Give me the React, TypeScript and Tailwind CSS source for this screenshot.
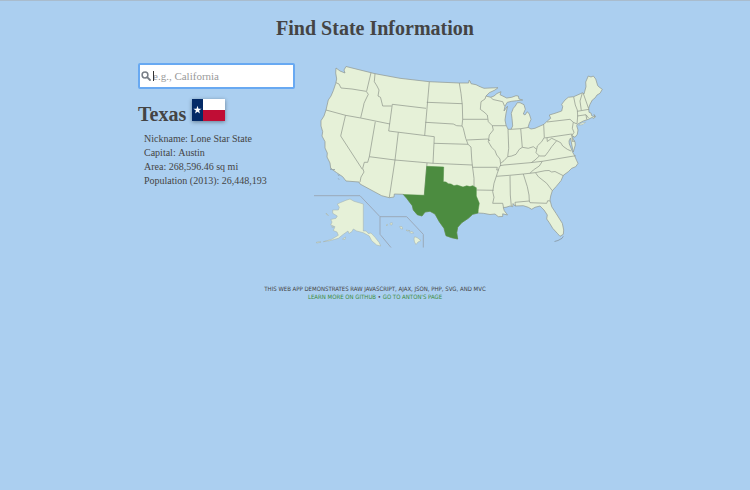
import React from "react";

const LAND =
  "M336 68L340 71L345 73L344 70L346 66.5L371 72.7L375 73.7L400 78.3L429.3 81.7L459.3 83L468.6 83L469 80.3L470 81L471 83.7L476 84.7L480 86.7L484 88.3L490 88L498 87.7L495 90L489.3 92.7L486 96L490.7 97.3L494 96L497 93.5L501 91.7L500 94.7L502.7 96L506.7 98L511.7 97.3L516 95.7L518.3 96L519 99L522.7 100L516.7 100.7L511.7 101.3L507.3 102.3L505 106L504 111L507.5 106.3L506 113.3L505 120L506 125L508 129.3L511 129.3L512.7 126L512 118.3L511.3 113.3L513.3 108.3L515.3 106L517.3 102.7L520 102.7L524 104.7L525.3 109.3L523.3 114L525 115L527.3 111.7L529.3 114L531 119.3L529.3 123.3L528 127.3L531 129L535 128.3L544 124.3L547.3 121L550.7 118.3L549.3 115L555 113.3L561.7 111L562.7 106.7L561.7 104.3L565 100L568.3 97.3L573.7 96.7L582.7 92.7L584 94L586 86.7L585.7 82L588.3 76L591 77L593.3 76L595.7 79L597.7 85.7L600 87.7L602.3 89.3L600 93.3L597 95L595 98L592.3 100L590 104.3L588.7 108L589 112.3L591 113L591.7 115.7L595 117L594 114.5L595.5 116.5L594 118.3L592 117.5L588.3 119.3L583.3 121L578.3 123.7L576.7 125.7L578 130L577.3 134.3L575 137.3L572.7 136L573 139L575 142L575.3 145L573.3 152L572 146L571.3 142L570.5 138L569 141L569.3 144L571 148L572.5 152L574.5 155.5L576.7 160.7L578 163.3L575.7 166.7L571.7 168.3L568.3 171.7L563.3 175.3L561 180.7L556 186.7L552.3 190.7L550.7 196L550 200L551.7 206.7L556 213.3L562.3 223.3L563.7 230L563.3 234.3L560 236.3L557.3 233.3L552.7 228.3L549.3 222.7L546.7 219L547.3 215L544 210L540 206L535 207.3L531.7 209.3L528.3 207.3L523.3 205.7L515 206L513 203.5L512.7 206.7L510 206L506 207.3L503.3 207.5L504.3 210.7L507.5 215L502.7 213.8L502.7 216.5L498.3 216.7L495 214L490 214.5L483.3 213.3L478 213L472.7 214.3L468.3 218.3L461.7 222.7L457.7 227.3L456.7 232.7L457.7 239L451.7 237.7L446 235.7L444 228.3L439.3 221.7L435 214L430 211.3L425 212L422 216L417.3 214.7L413.3 210L412.3 205.7L406.7 198.3L403.3 194.3L394.3 194L394 197L389.3 197.7L381.7 195.7L360 184L359 182L346 181L342.7 176.7L336.7 172.7L330.7 168.3L330 163L327 157L327.3 153L325 148L325 141.7L322 136L322.7 131.7L321 126L321 120.7L324 116L326 110L328.3 100L331 96L333.3 90.7L335.7 83.5L336.7 79L335.7 73Z";

const TEXAS =
  "M426.7 166.3L443.7 167L443.3 181.7L446 182L448.3 183.7L451 184L454 185.7L457 185L460 186L463 187L466.7 185.8L470 186.6L472.7 185.7L476.3 187.7L476.3 196L479.3 203.3L478.3 209.3L478 213L472.7 214.3L468.3 218.3L461.7 222.7L457.7 227.3L456.7 232.7L457.7 239L451.7 237.7L446 235.7L444 228.3L439.3 221.7L435 214L430 211.3L425 212L422 216L417.3 214.7L413.3 210L412.3 205.7L406.7 198.3L403.3 194.5L424.3 195.3Z";

const BORDERS = [
  // Pacific and mountain states
  "M336 82.7L339 84L341 88L352 89L358 90L366 91.3",
  "M371 72.7L366.5 91.7L368.3 94.3L366 99L364 103.3L363.5 106L360.7 117.7",
  "M326 110L345.5 115.3L360.7 118L390 124",
  "M375 73.7L374.3 81.7L377 86L379 90L378 96L380.5 97.3L382.7 106L391.7 106",
  "M392.3 104.3L388.7 131L434.3 136.7",
  "M392.3 104.3L426 108.3",
  "M345.5 115.3L340.7 136L362.3 169.3",
  "M375.3 121.7L369.3 156.7L367.7 162.3L364.3 162.3L362.7 168.3L364 172L361 177L360 182",
  "M369.3 156.7L395 160L433 163.3L472.3 165",
  "M398.3 132.3L395 160L389.3 197.5",
  "M427 163L424.3 195.3",
  // Plains
  "M429.3 81.7L424.7 135.3",
  "M426.7 102.3L462.3 103.7",
  "M425.3 122.3L453.3 124L456.7 125.7L462 126",
  "M434.3 136.7L433 163.3",
  "M434 143.3L468 144.3",
  "M459.3 83L461 93.3L462.3 105L462.7 119.3L462 125.7L463.3 128.3L465.7 138.3L468 144.3L471 147L471.7 159L472.3 165L474 178.3L474 186.3",
  "M462.7 119.3L487.7 119.3",
  "M466.7 140L488.3 139L490 141",
  "M472.5 167.3L497.3 167.3L496.7 170L498.5 170",
  "M476.3 190L493.5 190.3",
  // Mississippi River
  "M486 96L485 99L481 101.7L480.3 109.3L484 112L487.3 115L488.3 121.7L492.3 125.7L493.3 130L489.3 135L488.3 141.7L491.7 147.3L495 150.7L496.7 155L500 159L500.7 165L499.3 167.3L497.3 173.3L494 183.3L492.7 191.7L494 197.3L492.7 203.3L502.7 203.3L503.5 207.5",
  // Great Lakes
  "M490.7 97.3L493 99.5L502.7 101.7L504.5 106",
  "M492.3 125.7L506 125.7",
  "M508 129.3L508.7 148.3L507.7 156.7",
  "M520.7 128.7L522.3 147.3",
  "M511 129.3L520.7 128.7L528 127.5",
  // Ohio River and Appalachia
  "M500.7 163.3L504 160.7L507.7 156.7L511.7 156L516 154.3L519.3 149.3L522.3 147.3L528.3 148.3L533.3 146.7L536.7 149.3L537.3 146L541.7 141.7L544.3 137.3L543.7 124.5",
  "M536.7 149.3L536 152.7L539.3 156L535 160L531.5 162.5",
  "M539.3 156L545 156L548.3 151.7L551.7 146.7L556.7 140.7",
  "M544.3 138L571.7 134L572.5 141.5L575 141",
  "M547 138L547.3 141.5L551.7 138.3L556.7 140.7L560.7 142.7L562.7 146L567.3 149.3L571 151",
  // South
  "M500 165.7L504 165L530 162.7L542.3 161.3L575.7 155.7",
  "M542.3 161.3L539.3 166L533.3 170L530 173.3",
  "M496.5 176.3L509.7 175.3L523.3 174L535 172.7L545 170.7L549 170.5L551.7 172L555 171.5L563.3 175.7",
  "M510 175.7L510.3 195L511.3 206",
  "M523.3 174L527.3 186.7L529 195L529.3 201L530 202.7L546.7 203.3L547.7 200.7L550 201",
  "M515.5 206L515 202.3L529.3 201",
  "M535.7 173L538.3 176.7L546.7 183.3L552.3 190.7",
  // Northeast
  "M547 122L570 119.3L573.3 122.3L572.3 128.3L574 132.3L571.7 136",
  "M573.3 122.3L577 124L577.7 116L577.3 110L575.3 105L573.7 97",
  "M582.3 93.2L580 101L581.3 110.3",
  "M583.3 93.5L588.5 108.3",
  "M577.3 111.3L589 109.3",
  "M577.3 116L586 114.7L588.5 118",
  "M586 115L586.7 119.3",
];

const ISLANDS = [
  "M578.5 125.3L581 123.3L585.5 122L583 124.5Z",
  // Alaska
  "M340.7 202.5L346 200.3L350 199L354 201.3L363.3 204L363.3 231L366 231L368.3 233.5L371 233L375 237.3L379.3 242.7L380.7 246L376.7 245L371.7 240.7L369.3 236L363.3 232.7L356.7 231L353.3 229L352 231.5L349 233.5L348 231L343.3 234.3L338.3 238.3L330 240.7L323.3 241.7L331.7 239.3L338.3 235.3L337 232L333.3 230.5L335 226.7L330.7 225L332 222L330.7 219.5L336 218.3L337.3 216L332.7 213.3L332.7 210L338.3 210L339.3 207.3L337.3 204Z",
  "M342.5 239L345.5 237L345 239.5Z",
  "M326 213L328.5 215.5L326.5 214.5Z",
  "M332 226L334 227L332 227.5Z",
  "M316 242.5L319 241.7L321 242L317 243Z",
  // Hawaii
  "M386 225L387.5 224.3L387 226Z",
  "M390 223.2L392.3 222.7L392 225L390.3 224.7Z",
  "M399.7 226.5L402 226.7L402.7 229L400.7 228.7Z",
  "M406 230L410 230.7L407 231Z",
  "M409.5 232L412 231.5L413.7 233L411 233.2Z",
  "M414.5 236.8L417 237.5L421 240.5L418 242L416 244.5L414.5 242L414 239Z",
];

const STRAYS = [
  "M330 169.3L332 169M332.5 169.7L335 169.5",
  "M338 174.5L339.3 176M338.3 178.5L339 179.5",
  "M554.5 241.5L558 240.5L562 238.3L563.3 236.3",
];

function StateMap() {
  return (
    <svg
      viewBox="313 63 299 190"
      className="block w-full"
      role="img"
      aria-label="Map of the United States with Texas selected"
      strokeLinejoin="round"
    >
      <path d="M314 195.7H360L380 216.7H406.7L423.3 234.3V247.5M380 216.7V234.3L391 247.5" fill="none" stroke="#98a5b3" strokeWidth="0.9" />
      <path d={LAND} fill="#e6f1d8" stroke="#8f978f" strokeWidth="0.7" />
      {ISLANDS.map((d) => (
        <path key={d} d={d} fill="#e6f1d8" stroke="#a3afa8" strokeWidth="0.5" />
      ))}
      <path d={BORDERS.join("")} fill="none" stroke="#8d9489" strokeWidth="0.7" />
      <path d={STRAYS.join("")} fill="none" stroke="#7f8d94" strokeWidth="0.7" />
      <path d={TEXAS} fill="#4c8c40" stroke="#4c8c40" strokeWidth="0.5" />
    </svg>
  );
}

function TexasFlag() {
  return (
    <svg viewBox="0 0 33 22" className="mt-0.5 h-[22px] w-[33px] shadow-[0_1px_4px_#00000066]" role="img" aria-label="Flag of Texas">
      <path d="M0 0H33V11H0Z" fill="#fff" />
      <path d="M0 11H33V22H0Z" fill="#c00d35" />
      <path d="M0 0H11V22H0Z" fill="#042a66" />
      <path d="M5.5 6.7L6.5 9.7H9.6L7.1 11.6L8 14.6L5.5 12.8L3 14.6L3.9 11.6L1.4 9.7H4.5Z" fill="#fff" />
    </svg>
  );
}

const facts = [
  ["Nickname", "Lone Star State"],
  ["Capital", "Austin"],
  ["Area", "268,596.46 sq mi"],
  ["Population (2013)", "26,448,193"],
];

export default function App() {
  return (
    <div className="min-h-screen border-t border-[#a9bccd] bg-[#abcff0] px-4 font-['Palatino_Linotype','Liberation_Serif',serif] text-[#444]">
      <h1 className="pt-3 text-center text-[20px] leading-[30px] font-bold">Find State Information</h1>

      <main className="mx-auto mt-5 flex max-w-[474px] gap-[18px]">
        <section className="w-[157px] shrink-0">
          <form role="search" className="relative" onSubmit={(e) => e.preventDefault()}>
            <label htmlFor="state" className="absolute top-2 left-[3px]">
              <svg viewBox="0 0 10 10" className="size-[10px]" fill="none" stroke="#777d85" strokeLinecap="round" role="img" aria-label="State">
                <circle cx="4" cy="4" r="2.9" strokeWidth="1.5" />
                <path d="M6.4 6.4L9 9" strokeWidth="1.8" />
              </svg>
            </label>
            <input
              id="state"
              type="text"
              placeholder="e.g., California"
              className="block h-[26px] w-full rounded-[2px] border-2 border-[#68a9f2] bg-white pl-[13px] text-[11px] outline-none placeholder:text-[#999]"
            />
            <span className="absolute top-2 left-[15px] h-[10px] w-px bg-[#333]" />
          </form>

          <h2 className="mt-2 flex items-start gap-1.5 text-[20px] leading-[35px] font-bold">
            Texas
            <TexasFlag />
          </h2>
          <dl className="pl-1.5 text-[10px] leading-[14px]">
            {facts.map(([name, value]) => (
              <div key={name} className="whitespace-nowrap">
                <dt className="inline">{name}: </dt>
                <dd className="inline">{value}</dd>
              </div>
            ))}
          </dl>
        </section>

        <section className="min-w-0 flex-1">
          <StateMap />
        </section>
      </main>

      <footer className="mt-8 text-center font-['DejaVu_Sans_Condensed','DejaVu_Sans',sans-serif] text-[6px] leading-[8px] uppercase">
        <p>This web app demonstrates raw JavaScript, Ajax, JSON, PHP, SVG, and MVC</p>
        <p>
          <a href="#github" className="text-[#3c8c3c]">Learn more on GitHub</a> •{" "}
          <a href="#anton" className="text-[#3c8c3c]">Go to Anton's page</a>
        </p>
      </footer>
    </div>
  );
}
